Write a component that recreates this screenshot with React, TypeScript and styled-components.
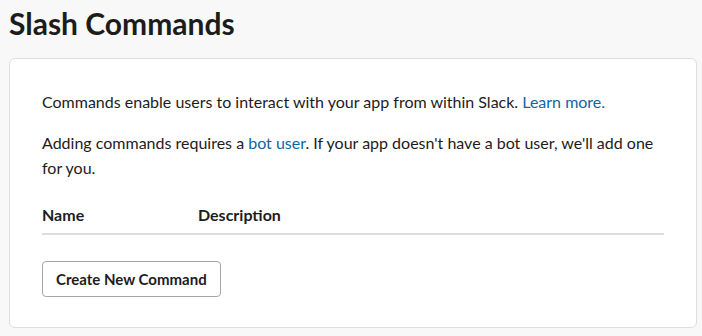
import React from 'react';
import styled, { createGlobalStyle } from 'styled-components';

const GlobalStyle = createGlobalStyle`
  html, body {
    margin: 0;
    padding: 0;
    background: #f8f8f8;
    font-family: Lato, "Open Sans", sans-serif;
    color: #1d1c1d;
  }
`;

const Page = styled.div`
  padding: 0 5px 0 9px;
`;

const Title = styled.h1`
  margin: 0;
  padding-top: 2px;
  font-size: 30px;
  font-weight: 700;
  line-height: 42px;
`;

const Card = styled.section`
  margin-top: 14px;
  background: #fff;
  border: 1px solid #dddddd;
  border-radius: 6px;
  padding: 30px 32px 30px 32px;
  width: 688px;
  box-sizing: border-box;
`;

const Para = styled.p`
  margin: 0 0 16px;
  font-size: 16px;
  line-height: 25px;
`;

const Link = styled.a`
  color: #1264a3;
  text-decoration: none;
`;

const HeaderRow = styled.div`
  display: flex;
  margin-top: 24px;
  padding-bottom: 7px;
  border-bottom: 2px solid #dddddd;
`;

const HeaderCell = styled.div<{ $width?: number }>`
  width: ${(p) => (p.$width ? `${p.$width}px` : 'auto')};
  font-size: 16px;
  font-weight: 700;
  line-height: 22px;
`;

const Button = styled.button`
  display: block;
  margin-top: 26px;
  height: 36px;
  padding: 0 13px;
  background: #fff;
  border: 1px solid #a6a6a6;
  border-radius: 4px;
  font-family: Lato, sans-serif;
  font-size: 15px;
  font-weight: 700;
  color: #1d1c1d;
`;

export default function App() {
  return (
    <Page>
      <GlobalStyle />
      <Title>Slash Commands</Title>
      <Card>
        <Para>
          Commands enable users to interact with your app from within Slack. <Link href="#">Learn more.</Link>
        </Para>
        <Para>
          Adding commands requires a <Link href="#">bot user</Link>. If your app doesn't have a bot user, we'll add one for you.
        </Para>
        <HeaderRow>
          <HeaderCell $width={156}>Name</HeaderCell>
          <HeaderCell>Description</HeaderCell>
        </HeaderRow>
        <Button>Create New Command</Button>
      </Card>
    </Page>
  );
}
